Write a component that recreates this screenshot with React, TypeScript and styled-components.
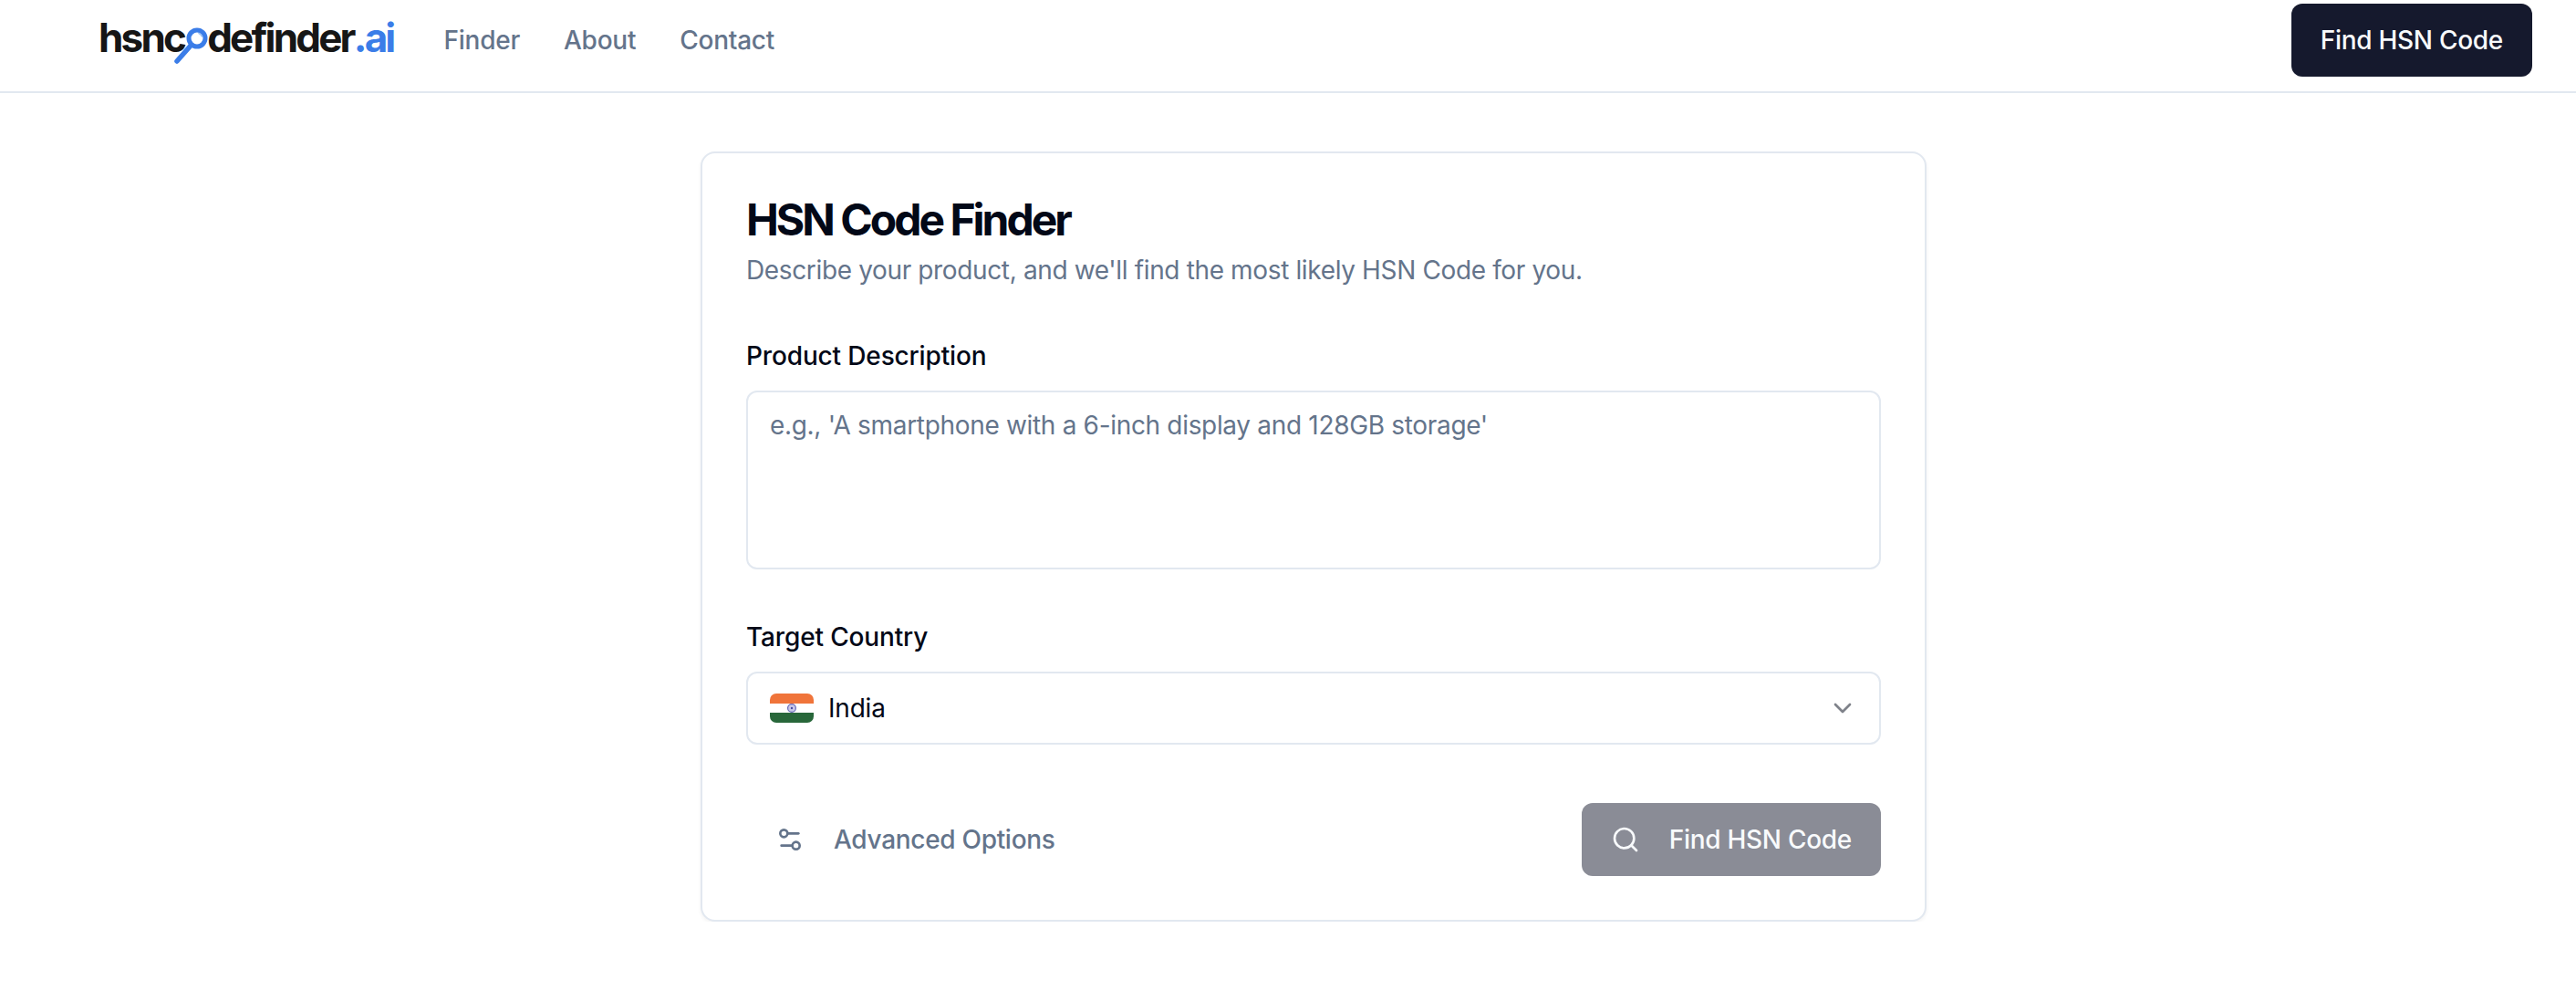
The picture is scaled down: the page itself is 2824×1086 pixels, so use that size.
import styled, { createGlobalStyle } from "styled-components";
import { ChevronDown, Search, Settings2 } from "lucide-react";

const GlobalStyle = createGlobalStyle`
  * {
    box-sizing: border-box;
  }
  body {
    margin: 0;
    background: #ffffff;
    color: #020817;
    font-family: Inter, "Liberation Sans", sans-serif;
    -webkit-font-smoothing: antialiased;
  }
`;

const Header = styled.header`
  display: flex;
  align-items: center;
  justify-content: space-between;
  height: 102px;
  padding: 4px 48px 16px 108px;
  border-bottom: 2px solid #e2e8f0;
`;

const HeaderLeft = styled.div`
  display: flex;
  align-items: center;
  gap: 55px;
`;

const Logo = styled.a`
  display: flex;
  align-items: baseline;
  margin-top: -6px;
  font-size: 44px;
  line-height: 48px;
  font-weight: 700;
  letter-spacing: -2.8px;
  color: #161616;
`;

const LogoAccent = styled.span`
  color: #3b7de8;
`;

const LogoLens = styled.svg`
  width: 24px;
  height: 32px;
  margin: 0 0 -2px 1px;
  overflow: visible;
`;

const Nav = styled.nav`
  display: flex;
  gap: 48px;
`;

const NavLink = styled.a`
  font-size: 28px;
  line-height: 40px;
  font-weight: 500;
  letter-spacing: -0.25px;
  color: #64748b;
`;

const Button = styled.button<{ $disabled?: boolean }>`
  display: flex;
  align-items: center;
  justify-content: center;
  gap: 32px;
  height: 80px;
  padding: 0 32px;
  border: 0;
  border-radius: 12px;
  background: ${(p) => (p.$disabled ? "#8a8c96" : "#15192d")};
  color: #f8fafc;
  font-family: inherit;
  font-size: 28px;
  font-weight: 500;
  letter-spacing: -0.28px;
`;

const Main = styled.main`
  padding: 64px 0 0 768px;
`;

const Card = styled.section`
  width: 1344px;
  padding: 48px;
  border: 2px solid #e2e8f0;
  border-radius: 16px;
  background: #ffffff;
  box-shadow: 0 2px 4px rgba(0, 0, 0, 0.05);
`;

const Title = styled.h1`
  margin: 1px 0 -1px;
  font-size: 48px;
  line-height: 48px;
  font-weight: 700;
  letter-spacing: -3px;
`;

const Subtitle = styled.p`
  margin: 12px 0 0;
  font-size: 28px;
  line-height: 40px;
  letter-spacing: -0.36px;
  color: #64748b;
`;

const Field = styled.div`
  display: flex;
  flex-direction: column;
  gap: 24px;
  margin-top: 60px;
`;

const Label = styled.label`
  font-size: 28px;
  line-height: 28px;
  font-weight: 500;
  letter-spacing: -0.15px;
`;

const TextArea = styled.textarea`
  display: block;
  width: 100%;
  height: 196px;
  padding: 16px 24px;
  border: 2px solid #e2e8f0;
  border-radius: 12px;
  background: #ffffff;
  font-family: inherit;
  font-size: 28px;
  line-height: 40px;
  letter-spacing: -0.32px;
  resize: none;
  outline: none;

  &::placeholder {
    color: #64748b;
    opacity: 1;
  }
`;

const Select = styled.div`
  display: flex;
  align-items: center;
  justify-content: space-between;
  height: 80px;
  padding: 0 24px;
  border: 2px solid #e2e8f0;
  border-radius: 12px;
`;

const SelectValue = styled.span`
  display: flex;
  align-items: center;
  gap: 16px;
  font-size: 28px;
  line-height: 40px;
  letter-spacing: -0.2px;
`;

const Caret = styled(ChevronDown)`
  color: #020817;
  opacity: 0.5;
`;

const Actions = styled.div`
  display: flex;
  align-items: center;
  justify-content: space-between;
  margin-top: 64px;
`;

const GhostButton = styled.button`
  display: flex;
  align-items: center;
  gap: 32px;
  height: 80px;
  padding: 0 32px;
  border: 0;
  background: transparent;
  color: #64748b;
  font-family: inherit;
  font-size: 28px;
  font-weight: 500;
  letter-spacing: -0.3px;
`;

function App() {
  return (
    <>
      <GlobalStyle />
      <Header>
        <HeaderLeft>
          <Logo>
            hsnc
            <LogoLens viewBox="0 0 24 32" role="img" aria-label="o">
              <path d="M6 25 L-9 42" stroke="#3b7de8" strokeWidth="5.5" strokeLinecap="round" />
              <circle cx="13" cy="17" r="9" fill="#ffffff" stroke="#3b7de8" strokeWidth="5" />
              <path d="M15 11.5 Q17.5 12.5 18.5 15" fill="none" stroke="#9cc0f2" strokeWidth="1.6" strokeLinecap="round" />
            </LogoLens>
            definder
            <LogoAccent>.ai</LogoAccent>
          </Logo>
          <Nav>
            <NavLink>Finder</NavLink>
            <NavLink>About</NavLink>
            <NavLink>Contact</NavLink>
          </Nav>
        </HeaderLeft>
        <Button>Find HSN Code</Button>
      </Header>
      <Main>
        <Card>
          <Title>HSN Code Finder</Title>
          <Subtitle>Describe your product, and we'll find the most likely HSN Code for you.</Subtitle>
          <Field>
            <Label>Product Description</Label>
            <TextArea placeholder="e.g., 'A smartphone with a 6-inch display and 128GB storage'" />
          </Field>
          <Field>
            <Label>Target Country</Label>
            <Select>
              <SelectValue>
                <svg width="48" height="32" viewBox="0 0 48 32">
                  <clipPath id="flag-clip">
                    <rect width="48" height="32" rx="7" />
                  </clipPath>
                  <g clipPath="url(#flag-clip)">
                    <rect width="48" height="32" fill="#ffffff" />
                    <rect width="48" height="11" fill="#f0743a" />
                    <rect y="21" width="48" height="11" fill="#28673a" />
                    <circle cx="24" cy="16" r="4.4" fill="#c9c9ea" stroke="#6a6ab8" strokeWidth="1.2" />
                    <circle cx="24" cy="16" r="1.2" fill="#4a4aa0" />
                  </g>
                </svg>
                India
              </SelectValue>
              <Caret size={32} />
            </Select>
          </Field>
          <Actions>
            <GhostButton>
              <Settings2 size={32} />
              Advanced Options
            </GhostButton>
            <Button $disabled>
              <Search size={32} />
              Find HSN Code
            </Button>
          </Actions>
        </Card>
      </Main>
    </>
  );
}

export default App;
